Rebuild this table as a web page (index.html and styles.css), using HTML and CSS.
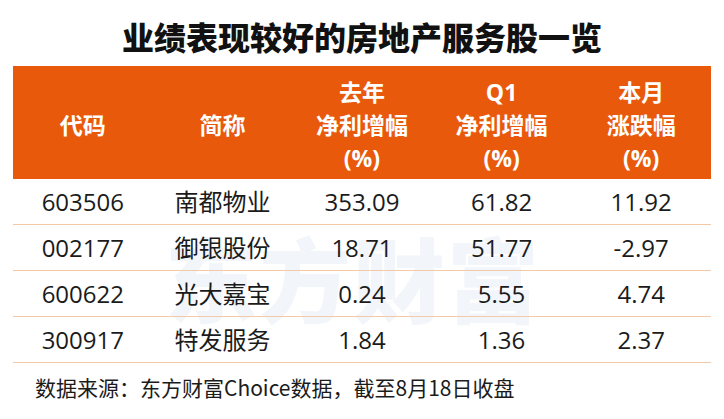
FILE: index.html
```html
<!DOCTYPE html>
<html lang="zh">
<head>
<meta charset="utf-8">
<title>业绩表现较好的房地产服务股一览</title>
<link rel="stylesheet" href="styles.css">
</head>
<body>
<div class="page">
  <h1 class="title">业绩表现较好的房地产服务股一览</h1>
  <div class="table">
    <div class="watermark" aria-hidden="true"></div>
    <div class="head">
      <div class="hcell"><span>代码</span></div>
      <div class="hcell"><span>简称</span></div>
      <div class="hcell"><span>去年</span><span>净利增幅</span><span>(%)</span></div>
      <div class="hcell"><span>Q1</span><span>净利增幅</span><span>(%)</span></div>
      <div class="hcell"><span>本月</span><span>涨跌幅</span><span>(%)</span></div>
    </div>
    <div class="row">
      <div class="cell">603506</div><div class="cell">南都物业</div><div class="cell">353.09</div><div class="cell">61.82</div><div class="cell">11.92</div>
    </div>
    <div class="row">
      <div class="cell">002177</div><div class="cell">御银股份</div><div class="cell">18.71</div><div class="cell">51.77</div><div class="cell">-2.97</div>
    </div>
    <div class="row">
      <div class="cell">600622</div><div class="cell">光大嘉宝</div><div class="cell">0.24</div><div class="cell">5.55</div><div class="cell">4.74</div>
    </div>
    <div class="row">
      <div class="cell">300917</div><div class="cell">特发服务</div><div class="cell">1.84</div><div class="cell">1.36</div><div class="cell">2.37</div>
    </div>
  </div>
  <p class="source">数据来源：东方财富Choice数据，截至8月18日收盘</p>
</div>
</body>
</html>
```

FILE: styles.css
```css
* { box-sizing: border-box; }
html, body { margin: 0; padding: 0; background: #ffffff; }
body {
  font-family: "Open Sans", "Noto Sans CJK SC", sans-serif;
  color: #1b1b1b;
}
.page {
  width: 724px;
  height: 419px;
  padding: 0 13px;
  overflow: hidden;
}
.title {
  margin: 0;
  padding: 13px 0 7px;
  line-height: 46px;
  font-size: 32px;
  font-weight: 900;
  font-family: "Noto Sans CJK SC", sans-serif;
  text-align: center;
  color: #111111;
}
.table {
  position: relative;
}
.watermark {
  position: absolute;
  left: 152px;
  top: 160px;
  z-index: 0;
  pointer-events: none;
}
.watermark::before {
  content: "东方财富";
  font-family: "Noto Sans CJK SC", sans-serif;
  font-weight: 900;
  font-size: 92px;
  line-height: 100px;
  color: #f2f5f9;
  letter-spacing: 2px;
  white-space: nowrap;
}
.head {
  display: grid;
  grid-template-columns: repeat(5, 1fr);
  background: #e8590c;
  height: 113px;
  padding: 10px 0 4px;
  color: #ffffff;
  font-weight: 700;
  font-size: 23px;
  position: relative;
  z-index: 1;
}
.hcell {
  display: flex;
  flex-direction: column;
  align-items: center;
  justify-content: center;
  line-height: 33px;
}
.row {
  display: grid;
  grid-template-columns: repeat(5, 1fr);
  height: 46px;
  border-bottom: 1px solid #f2caa8;
  position: relative;
  z-index: 1;
}
.cell {
  display: flex;
  align-items: center;
  justify-content: center;
  font-size: 24px;
  line-height: 1;
}
.source {
  margin: 0;
  padding: 10px 0 0 22px;
  font-family: "Noto Sans CJK SC", sans-serif;
  font-size: 21px;
  line-height: 28px;
  color: #1b1b1b;
}
```
